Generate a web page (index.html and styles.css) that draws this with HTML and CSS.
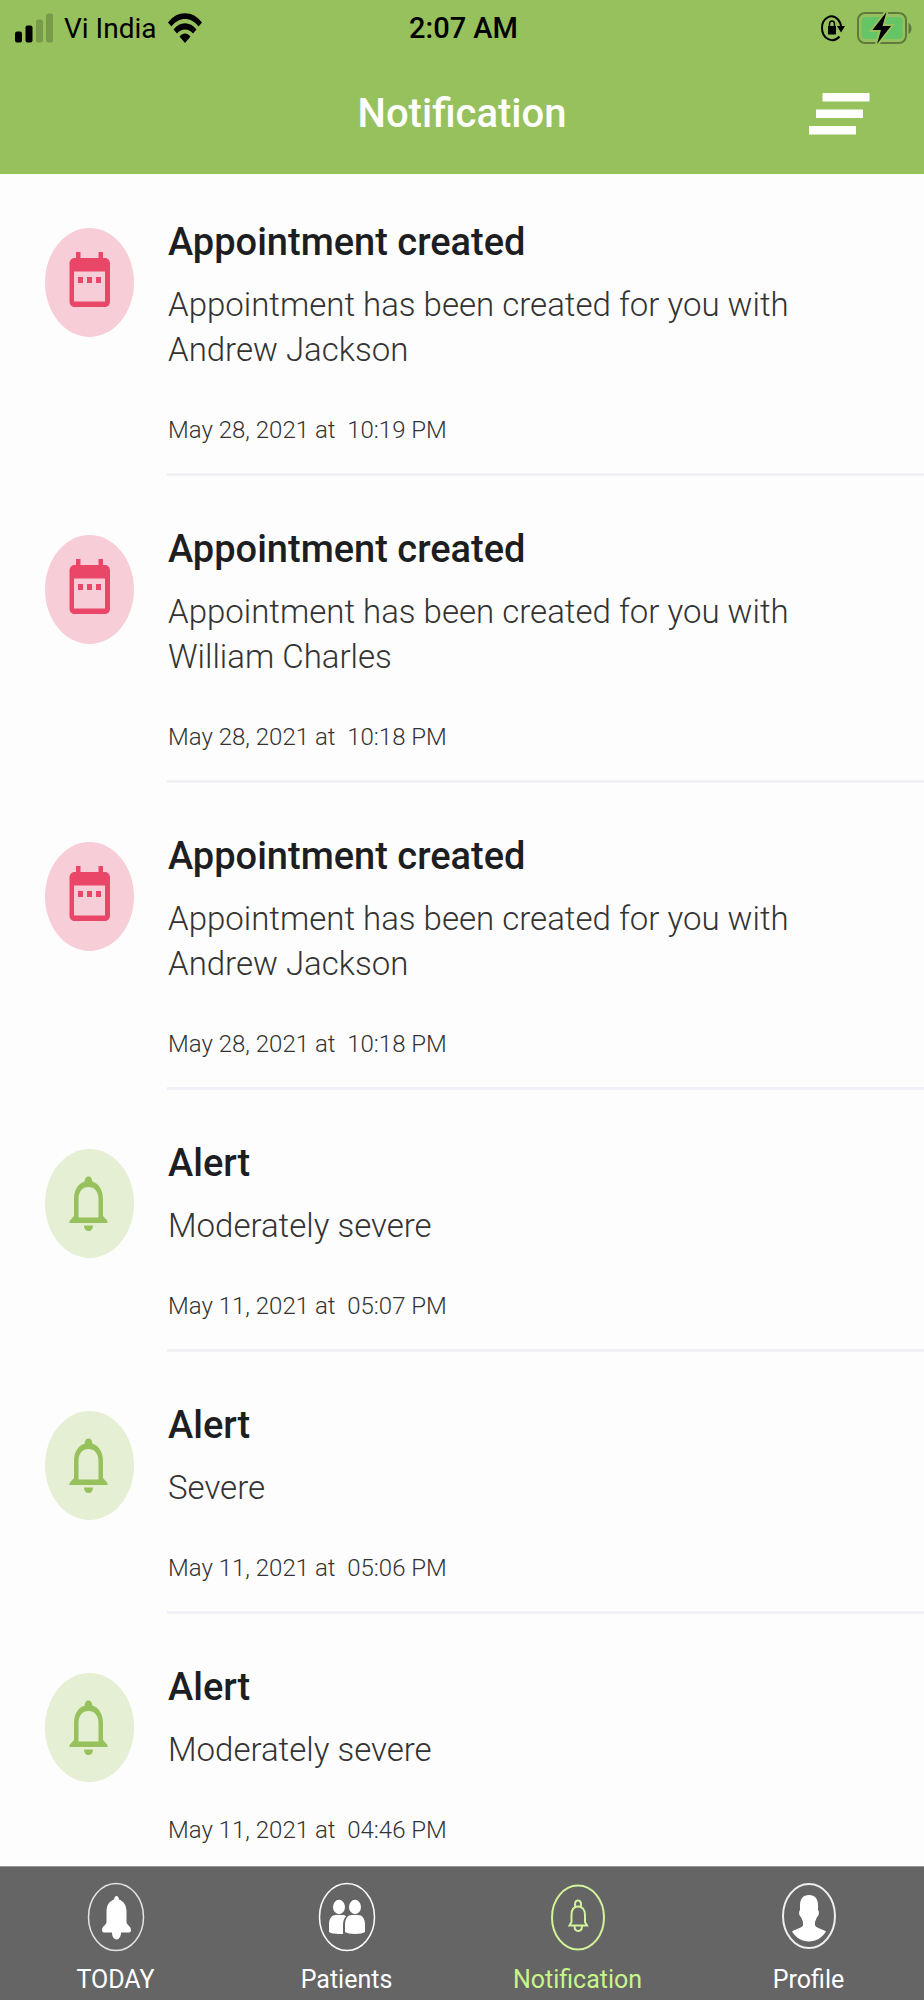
FILE: index.html
```html
<!DOCTYPE html>
<html lang="en">
<head>
<meta charset="utf-8">
<meta name="viewport" content="width=device-width, initial-scale=1">
<title>Notification</title>
<link rel="stylesheet" href="styles.css">
</head>
<body>
<svg class="sprite" aria-hidden="true">
  <symbol id="calendar" viewBox="0 0 89 109">
    <path fill="#ea4768" fill-rule="evenodd" d="M31 24h4.500v6h18v-6h4.500v6h2c3 0 5 2.500 5 5.500v38c0 3-2 5.500-5 5.500H29.500c-3 0-5-2.500-5-5.500v-38c0-3 2-5.500 5-5.500H31zM29 43.500V73.500h31V43.500z"/>
    <path fill="#ea4768" d="M33 49h5v6h-5zM42 49h5v6h-5zM51 49h5v6h-5z"/>
  </symbol>
  <symbol id="bell" viewBox="0 0 89 109">
    <path fill="#97c15c" fill-rule="evenodd" d="M43.500 27.500c2.400 0 3.800 2 3.800 5 6.500 2 10.700 8.500 10.700 17.500v17l4.500 5v2h-38v-2l4.500-5V50c0-9 4.200-15.500 10.700-17.500 0-3 1.400-5 3.800-5zM43.500 38c-6 0-10 4.500-10 12v18.500h20V50c0-7.500-4-12-10-12z"/>
    <path fill="#97c15c" d="M39 76.500h9c0 3.500-2 5.500-4.500 5.500S39 80 39 76.500z"/>
  </symbol>
</svg>
<div class="app">
  <header class="top">
    <div class="status">
      <div class="status-left">
        <svg width="38" height="30" viewBox="0 0 38 30" aria-hidden="true">
          <rect x="0" y="18.500" width="7" height="11" rx="2"/><rect x="10.500" y="12.500" width="7" height="17" rx="2"/>
          <g fill="#789a4a"><rect x="21" y="6.500" width="7" height="23" rx="2.500"/><rect x="31" y="0.500" width="7" height="29" rx="2.500"/></g>
        </svg>
        <span class="carrier">Vi India</span>
        <svg width="34" height="30" viewBox="0 0 34 30" aria-hidden="true">
          <path d="M0 9.500C9-3 25-3 34 9.500l-3.500 4C23.500 3.500 10.500 3.500 3.500 13.500zM5.500 16.500c6.500-8.500 16.500-8.500 23 0L25 20.500c-4.500-5.500-11.500-5.500-16 0zM11.500 23.500c3.500-4 7.500-4 11 0L17 30z"/>
        </svg>
      </div>
      <span class="clock">2:07 AM</span>
      <div class="status-right">
        <svg width="24" height="28" viewBox="0 0 24 28" aria-hidden="true">
          <path d="M18.500 22.500C12 30 1 25 1 14 1 3.500 11 -1 17 5.500c2 2.200 3 5 3 8" fill="none" stroke="#000" stroke-width="2"/>
          <path d="M16 12h8l-4 6.500zM7 12h8v8.500H7z"/><path d="M8.500 13V10c0-4 5-4 5 0v3" fill="none" stroke="#000" stroke-width="1.500"/>
        </svg>
        <svg width="55" height="34" viewBox="0 0 55 34" aria-hidden="true">
          <rect x="1" y="2" width="48" height="30" rx="7" fill="none" stroke="#60793c" stroke-width="2"/>
          <rect x="4.500" y="6" width="41" height="22" rx="4" fill="#65c466"/>
          <path d="M51.500 12c4 1.500 4 9.500 0 11z" fill="#60793c"/>
          <path d="M29.500 1L15.500 19h8.500l-4 14L34 15h-8.500z" stroke="#97c15c" stroke-width="4"/>
          <path d="M29.500 1L15.500 19h8.500l-4 14L34 15h-8.500z"/>
        </svg>
      </div>
    </div>
    <div class="bar">
      <h1 class="heading">Notification</h1>
      <button class="menu" type="button" aria-label="Menu">
        <svg width="61" height="42" viewBox="0 0 61 42" aria-hidden="true"><path fill="#fff" d="M13.500 0h47v8.500h-47zM7 16.500h47V25H7zM0 33h47v8.500H0z"/></svg>
      </button>
    </div>
  </header>

  <main class="list">
    <article class="item">
      <svg class="badge pink" aria-hidden="true"><use href="#calendar"/></svg>
      <div class="body"><h2 class="title">Appointment created</h2><p class="message">Appointment has been created for you with Andrew Jackson</p><time class="date">May 28, 2021 at&nbsp; 10:19 PM</time></div>
    </article>
    <article class="item">
      <svg class="badge pink" aria-hidden="true"><use href="#calendar"/></svg>
      <div class="body"><h2 class="title">Appointment created</h2><p class="message">Appointment has been created for you with William Charles</p><time class="date">May 28, 2021 at&nbsp; 10:18 PM</time></div>
    </article>
    <article class="item">
      <svg class="badge pink" aria-hidden="true"><use href="#calendar"/></svg>
      <div class="body"><h2 class="title">Appointment created</h2><p class="message">Appointment has been created for you with Andrew Jackson</p><time class="date">May 28, 2021 at&nbsp; 10:18 PM</time></div>
    </article>
    <article class="item">
      <svg class="badge green" aria-hidden="true"><use href="#bell"/></svg>
      <div class="body"><h2 class="title">Alert</h2><p class="message">Moderately severe</p><time class="date">May 11, 2021 at&nbsp; 05:07 PM</time></div>
    </article>
    <article class="item">
      <svg class="badge green" aria-hidden="true"><use href="#bell"/></svg>
      <div class="body"><h2 class="title">Alert</h2><p class="message">Severe</p><time class="date">May 11, 2021 at&nbsp; 05:06 PM</time></div>
    </article>
    <article class="item">
      <svg class="badge green" aria-hidden="true"><use href="#bell"/></svg>
      <div class="body"><h2 class="title">Alert</h2><p class="message">Moderately severe</p><time class="date">May 11, 2021 at&nbsp; 04:46 PM</time></div>
    </article>
  </main>

  <nav class="tabs">
    <a class="tab" href="#today">
      <svg width="58" height="70" viewBox="0 0 58 70" aria-hidden="true">
        <ellipse cx="29" cy="35" rx="27.500" ry="33.500" fill="none" stroke="#e4e4e4" stroke-width="1.500"/>
        <path fill="#fff" d="M29.500 14c1.500 0 2 1.500 2.500 3.500 5 2 7.500 6 7.500 12V40c0 3 4.500 4 4.500 8 0 2-1 2.500-3 2.500h-7c0 4-2 7-4.500 7s-4.500-3-4.500-7h-7c-2 0-3-.5-3-2.500 0-4 4.500-5 4.500-8V29.500c0-6 2.500-10 7.500-12 .5-2 1-3.500 2.500-3.500z"/>
      </svg>
      <span>TODAY</span>
    </a>
    <a class="tab" href="#patients">
      <svg width="58" height="70" viewBox="0 0 58 70" aria-hidden="true">
        <ellipse cx="29" cy="35" rx="27.500" ry="33.500" fill="none" stroke="#fff" stroke-width="1.500"/>
        <g fill="#fff"><ellipse cx="21" cy="25" rx="6" ry="7.200"/><ellipse cx="37" cy="25" rx="6" ry="7.200"/>
        <path d="M11 50V43c0-7 3-10 7-10h6c2 0 3.500.5 4 1.200-2 2-3 5-3 8.800v9c-7 0-12-.3-14-2z"/>
        <path d="M27 50V43c0-7 3-10 7-10h6c4 0 7 3 7 10v7c-3 2.500-17 2.500-20 0z"/></g>
      </svg>
      <span>Patients</span>
    </a>
    <a class="tab active" href="#notification" aria-current="page">
      <svg width="58" height="70" viewBox="0 0 58 70" aria-hidden="true">
        <g fill="none" stroke="#d2f39b" stroke-width="2"><ellipse cx="29" cy="35.500" rx="26" ry="32"/>
        <path d="M26.500 25c-1-3-.5-6.500 2.500-6.500s3.500 3.500 2.500 6.500"/>
        <path d="M22.500 40v-7c0-6 3-8.500 6.500-8.500s7 2.500 7 8.500v7l2 3.500H20.500zM25.500 44c0 6.500 7.500 6.500 7.500 0"/></g>
      </svg>
      <span>Notification</span>
    </a>
    <a class="tab" href="#profile">
      <svg width="58" height="70" viewBox="0 0 58 70" aria-hidden="true">
        <ellipse cx="29" cy="34" rx="26" ry="32" fill="none" stroke="#eee" stroke-width="2"/>
        <path fill="#fff" d="M29 13c6 0 9 4 9 10v5c1.500 1.500 1 6-1 7l-2 5v3c0 3 7 3.500 11 6.500C42 56 36 59.500 29 59.500S16 56 12 49.500c4-3 11-3.500 11-6.500v-3l-2-5c-2-1-2.500-5.500-1-7v-5c0-6 3-10 9-10z"/>
      </svg>
      <span>Profile</span>
    </a>
  </nav>
</div>
</body>
</html>
```
FILE: styles.css
```css
* { box-sizing: border-box; }
body { margin: 0; background: #fdfdfd; font-family: Roboto, "Liberation Sans", sans-serif; }
h1, h2, p { margin: 0; }
.sprite { display: none; }
.app { display: flex; flex-direction: column; height: 100vh; }

.top { flex: none; background: #97c15c; color: #000; padding-bottom: 30px; }
.status { display: grid; grid-template-columns: 1fr auto 1fr; align-items: center; height: 56px; padding: 0 12px 0 15px; font-size: 29px; }
.status-left { display: flex; align-items: center; gap: 11px; }
.carrier { font-size: 28px; font-weight: 400; }
.clock { font-weight: 500; }
.status-right { display: flex; align-items: center; justify-content: flex-end; gap: 12px; }
.bar { display: grid; grid-template-columns: 1fr auto 1fr; align-items: center; padding: 28px 54px 0; }
.heading { grid-column: 2; color: #fff; font-size: 40px; line-height: 60px; font-weight: 500; }
.menu { justify-self: end; display: flex; padding: 0; border: 0; background: none; cursor: pointer; }

.list { flex: 1; min-height: 0; overflow-y: auto; scrollbar-width: none; }
.item { display: flex; gap: 33px; padding-left: 45px; }
.badge { flex: none; width: 89px; height: 109px; margin-top: 59px; border-radius: 50%; }
.pink { background: #f7cdd7; }
.green { background: #e4efd4; }
.body { flex: 1; padding: 47px 100px 25px 1px; border-bottom: 3px solid #f0f0f6; }
.item:first-child .badge { margin-top: 54px; }
.item:first-child .body { padding-top: 42px; }
.title { font-size: 38px; line-height: 52px; font-weight: 500; color: #1c1e21; }
.message { margin-top: 14px; font-size: 33px; line-height: 45px; font-weight: 300; color: #333; }
.date { display: block; margin-top: 40px; font-size: 24px; line-height: 36px; font-weight: 300; color: #333; }

.tabs { flex: none; display: grid; grid-template-columns: repeat(4, 1fr); background: #656565; border-top: 1px solid #999; }
.tab { display: flex; flex-direction: column; align-items: center; gap: 11px; padding: 15px 0 3px; color: #fff; text-decoration: none; font-size: 25px; line-height: 34px; }
.active { color: #c8f58a; }
```
